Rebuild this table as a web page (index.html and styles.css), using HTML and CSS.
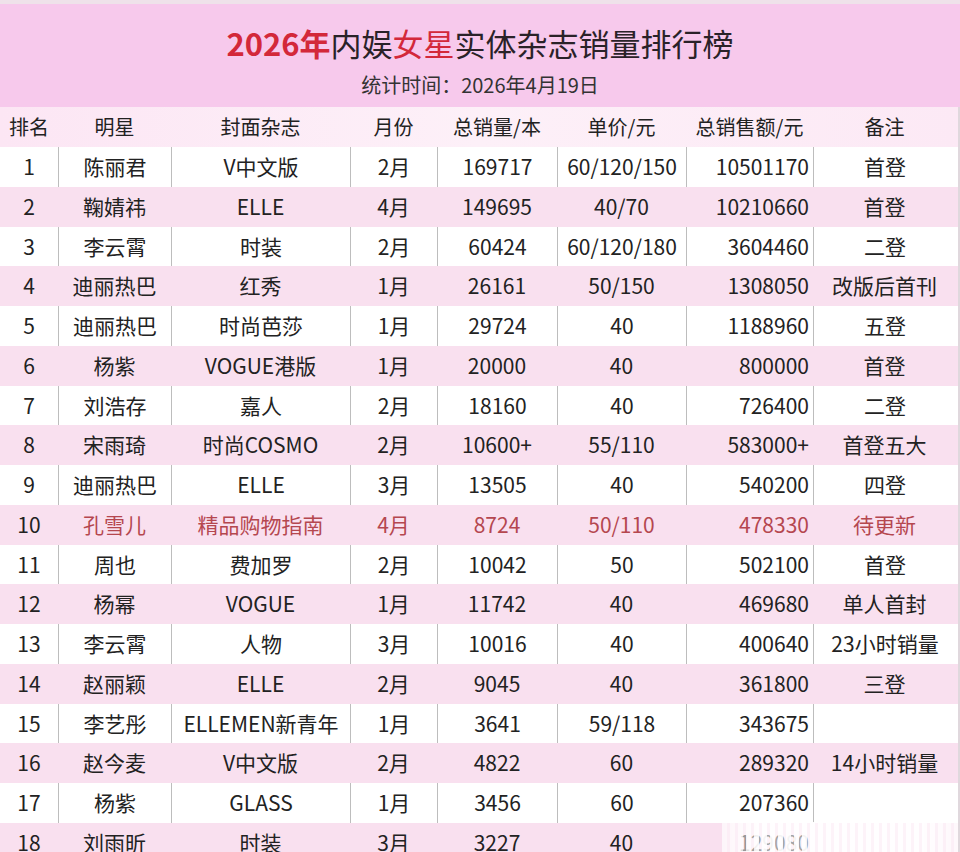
FILE: index.html
```html
<!DOCTYPE html>
<html lang="zh-CN">
<head>
<meta charset="utf-8">
<title>2026年内娱女星实体杂志销量排行榜</title>
<link rel="stylesheet" href="styles.css">
</head>
<body>
<div class="page">
  <header class="banner">
    <h1 class="title"><span class="red strong">2026年</span>内娱<span class="red">女星</span>实体杂志销量排行榜</h1>
    <p class="subtitle">统计时间：2026年4月19日</p>
  </header>
  <div class="table">
    <div class="row head">
      <div>排名</div><div>明星</div><div>封面杂志</div><div>月份</div><div>总销量/本</div><div>单价/元</div><div>总销售额/元</div><div>备注</div>
    </div>
    <div class="row odd"><div>1</div><div>陈丽君</div><div>V中文版</div><div>2月</div><div>169717</div><div>60/120/150</div><div class="num">10501170</div><div>首登</div></div>
    <div class="row even"><div>2</div><div>鞠婧祎</div><div>ELLE</div><div>4月</div><div>149695</div><div>40/70</div><div class="num">10210660</div><div>首登</div></div>
    <div class="row odd"><div>3</div><div>李云霄</div><div>时装</div><div>2月</div><div>60424</div><div>60/120/180</div><div class="num">3604460</div><div>二登</div></div>
    <div class="row even"><div>4</div><div>迪丽热巴</div><div>红秀</div><div>1月</div><div>26161</div><div>50/150</div><div class="num">1308050</div><div>改版后首刊</div></div>
    <div class="row odd"><div>5</div><div>迪丽热巴</div><div>时尚芭莎</div><div>1月</div><div>29724</div><div>40</div><div class="num">1188960</div><div>五登</div></div>
    <div class="row even"><div>6</div><div>杨紫</div><div>VOGUE港版</div><div>1月</div><div>20000</div><div>40</div><div class="num">800000</div><div>首登</div></div>
    <div class="row odd"><div>7</div><div>刘浩存</div><div>嘉人</div><div>2月</div><div>18160</div><div>40</div><div class="num">726400</div><div>二登</div></div>
    <div class="row even"><div>8</div><div>宋雨琦</div><div>时尚COSMO</div><div>2月</div><div>10600+</div><div>55/110</div><div class="num">583000+</div><div>首登五大</div></div>
    <div class="row odd"><div>9</div><div>迪丽热巴</div><div>ELLE</div><div>3月</div><div>13505</div><div>40</div><div class="num">540200</div><div>四登</div></div>
    <div class="row even hl"><div class="rank">10</div><div>孔雪儿</div><div>精品购物指南</div><div>4月</div><div>8724</div><div>50/110</div><div class="num">478330</div><div>待更新</div></div>
    <div class="row odd"><div>11</div><div>周也</div><div>费加罗</div><div>2月</div><div>10042</div><div>50</div><div class="num">502100</div><div>首登</div></div>
    <div class="row even"><div>12</div><div>杨幂</div><div>VOGUE</div><div>1月</div><div>11742</div><div>40</div><div class="num">469680</div><div>单人首封</div></div>
    <div class="row odd"><div>13</div><div>李云霄</div><div>人物</div><div>3月</div><div>10016</div><div>40</div><div class="num">400640</div><div>23小时销量</div></div>
    <div class="row even"><div>14</div><div>赵丽颖</div><div>ELLE</div><div>2月</div><div>9045</div><div>40</div><div class="num">361800</div><div>三登</div></div>
    <div class="row odd"><div>15</div><div>李艺彤</div><div>ELLEMEN新青年</div><div>1月</div><div>3641</div><div>59/118</div><div class="num">343675</div><div></div></div>
    <div class="row even"><div>16</div><div>赵今麦</div><div>V中文版</div><div>2月</div><div>4822</div><div>60</div><div class="num">289320</div><div>14小时销量</div></div>
    <div class="row odd"><div>17</div><div>杨紫</div><div>GLASS</div><div>1月</div><div>3456</div><div>60</div><div class="num">207360</div><div></div></div>
    <div class="row even"><div>18</div><div>刘雨昕</div><div>时装</div><div>3月</div><div>3227</div><div>40</div><div class="num">129080</div><div></div></div>
  </div>
  <div class="watermark"></div>
</div>
</body>
</html>
```

FILE: styles.css
```css
html, body {
  margin: 0;
  padding: 0;
  background: #fbe6f2;
}
.page {
  position: relative;
  width: 960px;
  height: 852px;
  overflow: hidden;
  font-family: "Noto Sans CJK SC", "Microsoft YaHei", sans-serif;
  color: #222;
  background: #fae2f0;
  border-top: 4px solid #efe2ea;
  box-sizing: border-box;
}
.banner {
  background: #f7c9ec;
  padding: 19px 0 9px;
  text-align: center;
}
.title {
  margin: 0;
  font-size: 31px;
  line-height: 40px;
  font-weight: 400;
  color: #2a2228;
}
.red { color: #d3283a; }
.strong { font-weight: 700; }
.subtitle {
  margin: 8px 0 0;
  font-size: 20px;
  line-height: 27px;
  color: #333;
}
.table {
  border-right: 2px solid #e0d8dd;
  width: 958px;
}
.row {
  display: grid;
  grid-template-columns: 58px 113px 179px 87px 120px 129px 127px 143px;
  height: 39.75px;
  font-size: 21px;
  line-height: 39.75px;
  text-align: center;
  white-space: nowrap;
}
.row.head {
  height: 40px;
  line-height: 40px;
  font-size: 20px;
  background: linear-gradient(90deg, #fce6f4 0%, #fdf0f8 50%, #fce9f5 100%);
}
.row.odd {
  background: #ffffff;
}
.row.odd > div + div {
  border-left: 1px solid #bdbdbd;
}
.row.even {
  background: #f9e0ef;
}
.row .num {
  text-align: right;
  padding-right: 4px;
}
.row.hl > div {
  color: #b5474f;
}
.row.hl > .rank {
  color: #222;
}
.watermark {
  position: absolute;
  left: 722px;
  top: 818px;
  width: 236px;
  height: 34px;
  background: repeating-linear-gradient(90deg, rgba(255,255,255,0.95) 0 5px, rgba(255,255,255,0.6) 5px 8px);
  -webkit-mask-image: linear-gradient(90deg, rgba(0,0,0,0.7), #000 15%, #000 85%, rgba(0,0,0,0.8));
  mask-image: linear-gradient(90deg, rgba(0,0,0,0.7), #000 15%, #000 85%, rgba(0,0,0,0.8));
}
```
